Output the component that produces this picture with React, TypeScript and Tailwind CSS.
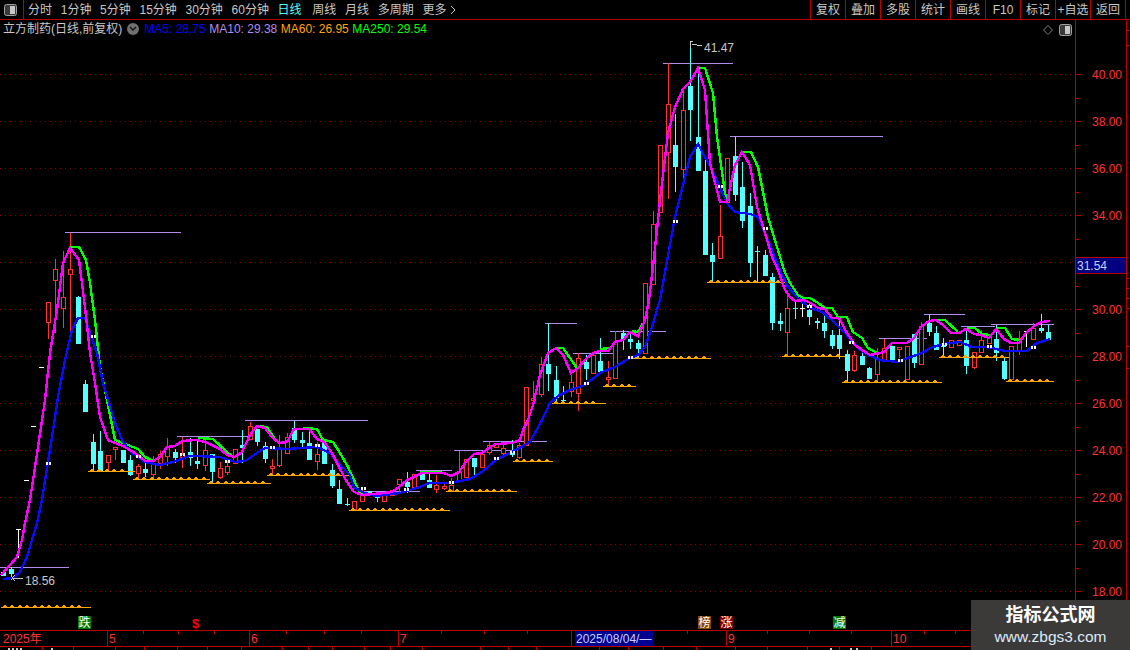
import React from "react";

type Candle = [number, number, number, number, number, "r" | "c" | "w"];
type Pt = [number, number];

// x, body top, body bottom, wick high, wick low, colour (all in page pixels)
const candles: Candle[] = [
  [3, 572, 576, 572, 576, "c"], [11, 569, 574, 567, 580, "c"], [18, 529, 530, 529, 558, "w"],
  [26, 480, 481, 480, 481, "w"], [33, 426, 427, 426, 427, "w"], [41, 367, 368, 367, 368, "w"],
  [48, 302, 322, 302, 339, "r"], [55, 269, 280, 259, 333, "r"], [63, 297, 308, 251, 328, "r"],
  [70, 269, 274, 233, 336, "r"], [78, 297, 344, 296, 344, "c"], [85, 384, 412, 380, 412, "c"],
  [93, 442, 464, 434, 471, "c"], [100, 451, 471, 431, 471, "c"], [108, 455, 462, 455, 471, "r"],
  [115, 447, 449, 447, 460, "r"], [123, 450, 463, 450, 463, "c"], [130, 460, 475, 455, 476, "c"],
  [138, 466, 473, 464, 478, "r"], [145, 469, 473, 463, 477, "c"], [153, 464, 474, 456, 478, "r"],
  [160, 454, 463, 451, 469, "r"], [167, 447, 456, 438, 466, "r"], [175, 452, 458, 449, 463, "c"],
  [182, 454, 457, 437, 468, "r"], [190, 452, 458, 438, 466, "c"], [197, 461, 464, 441, 469, "c"],
  [205, 450, 465, 438, 471, "r"], [212, 454, 472, 454, 483, "c"], [220, 468, 477, 462, 479, "r"],
  [227, 466, 472, 460, 475, "r"], [235, 449, 463, 449, 463, "r"], [242, 445, 448, 430, 463, "c"],
  [250, 426, 439, 422, 439, "r"], [257, 429, 442, 429, 446, "c"], [265, 446, 459, 442, 463, "c"],
  [272, 466, 468, 459, 475, "r"], [279, 449, 465, 435, 467, "r"], [287, 437, 453, 433, 453, "r"],
  [294, 428, 440, 421, 443, "c"], [302, 440, 443, 432, 449, "c"], [309, 443, 460, 432, 460, "c"],
  [317, 454, 461, 442, 470, "r"], [324, 443, 464, 442, 464, "c"], [332, 470, 486, 464, 488, "c"],
  [339, 489, 504, 480, 504, "c"], [347, 504, 505, 498, 506, "c"], [354, 501, 509, 501, 509, "r"],
  [362, 495, 501, 488, 501, "r"], [369, 491, 496, 491, 496, "c"], [377, 493, 498, 493, 502, "c"],
  [384, 494, 501, 494, 501, "r"], [392, 490, 495, 490, 495, "r"], [399, 479, 484, 479, 492, "r"],
  [407, 482, 487, 472, 493, "c"], [414, 474, 487, 474, 487, "r"], [422, 474, 480, 471, 480, "c"],
  [429, 480, 488, 472, 488, "c"], [436, 485, 489, 475, 493, "r"], [444, 486, 488, 484, 490, "r"],
  [451, 485, 490, 478, 490, "r"], [459, 472, 480, 451, 480, "r"], [466, 459, 477, 459, 477, "r"],
  [474, 458, 467, 458, 475, "c"], [482, 454, 467, 451, 467, "r"], [489, 445, 452, 442, 455, "r"],
  [496, 443, 447, 443, 447, "r"], [503, 448, 453, 445, 457, "r"], [512, 452, 455, 440, 457, "c"],
  [519, 445, 457, 443, 459, "r"], [526, 387, 445, 387, 445, "r"], [533, 398, 400, 381, 407, "r"],
  [541, 364, 394, 357, 397, "r"], [548, 364, 374, 323, 391, "c"], [556, 380, 398, 366, 403, "c"],
  [563, 400, 401, 386, 403, "c"], [571, 382, 391, 375, 397, "r"], [578, 358, 393, 353, 411, "r"],
  [586, 362, 369, 355, 380, "c"], [593, 355, 373, 352, 374, "r"], [600, 361, 372, 338, 374, "c"],
  [608, 377, 379, 361, 386, "r"], [615, 342, 378, 331, 378, "r"], [623, 333, 339, 330, 350, "c"],
  [630, 339, 342, 331, 349, "c"], [638, 343, 349, 340, 358, "c"], [645, 283, 353, 283, 353, "r"],
  [653, 224, 284, 211, 284, "r"], [660, 145, 212, 145, 212, "r"], [668, 104, 152, 63, 199, "r"],
  [675, 145, 167, 114, 192, "c"], [683, 110, 169, 90, 180, "r"], [690, 86, 110, 43, 141, "c"],
  [698, 137, 171, 73, 171, "c"], [705, 171, 255, 158, 255, "c"], [712, 255, 262, 243, 282, "c"],
  [720, 236, 258, 205, 258, "r"], [727, 158, 202, 158, 202, "r"], [735, 156, 195, 137, 201, "c"],
  [742, 187, 221, 162, 228, "c"], [750, 206, 263, 193, 277, "c"], [757, 251, 252, 246, 283, "c"],
  [765, 255, 276, 250, 276, "c"], [772, 277, 323, 273, 330, "c"], [780, 321, 324, 313, 331, "c"],
  [787, 308, 332, 295, 356, "r"], [795, 308, 309, 302, 319, "c"], [802, 308, 309, 302, 317, "w"],
  [809, 310, 317, 303, 325, "c"], [817, 321, 323, 318, 329, "c"], [824, 323, 331, 313, 338, "c"],
  [832, 335, 346, 330, 349, "c"], [839, 335, 349, 319, 359, "c"], [847, 354, 371, 350, 382, "c"],
  [854, 355, 370, 351, 372, "r"], [862, 356, 365, 353, 365, "c"], [869, 368, 379, 367, 379, "c"],
  [877, 358, 374, 348, 382, "r"], [884, 348, 359, 339, 359, "r"], [892, 346, 360, 346, 360, "c"],
  [899, 347, 349, 347, 358, "r"], [907, 346, 379, 346, 379, "r"], [914, 334, 363, 334, 368, "c"],
  [921, 326, 364, 322, 364, "r"], [929, 323, 332, 315, 336, "c"], [936, 333, 350, 326, 350, "c"],
  [943, 345, 347, 338, 356, "c"], [951, 340, 347, 340, 347, "r"], [959, 340, 345, 340, 345, "r"],
  [966, 340, 366, 330, 374, "c"], [974, 352, 367, 352, 369, "r"], [981, 340, 352, 330, 352, "r"],
  [989, 337, 343, 337, 343, "r"], [996, 339, 353, 325, 361, "c"], [1004, 361, 379, 357, 380, "c"],
  [1011, 346, 379, 346, 379, "r"], [1019, 338, 350, 331, 355, "r"], [1026, 331, 332, 331, 347, "w"],
  [1033, 328, 339, 323, 339, "r"], [1041, 328, 331, 314, 333, "c"], [1048, 332, 340, 325, 340, "c"],
];

const magenta: Pt[] = [
  [1, 575], [10, 565], [17, 557], [22, 540], [25, 523], [30, 500], [32, 487], [38, 447], [45, 400], [50, 353],
  [57, 310], [63, 263], [70, 248], [79, 260], [85, 307], [90, 353], [95, 383], [100, 417], [108, 440], [115, 443],
  [123, 446], [130, 450], [138, 455], [145, 461], [153, 461], [160, 457], [167, 447], [175, 446], [182, 441],
  [197, 440], [205, 442], [212, 445], [220, 449], [227, 455], [235, 457], [242, 452], [250, 435], [257, 426],
  [265, 428], [272, 437], [279, 443], [287, 442], [294, 429], [309, 429], [317, 439], [324, 442], [332, 453],
  [339, 467], [347, 482], [354, 492], [362, 495], [384, 493], [392, 492], [399, 487], [407, 480], [414, 477],
  [422, 473], [444, 473], [451, 476], [459, 472], [466, 462], [474, 454], [482, 453], [489, 448], [496, 444],
  [512, 443], [520, 440], [523, 430], [528, 420], [533, 405], [540, 375], [548, 353], [556, 348], [563, 355],
  [571, 373], [578, 368], [586, 359], [593, 353], [600, 351], [608, 351], [615, 342], [623, 340], [630, 332],
  [638, 336], [645, 320], [649, 300], [653, 267], [658, 220], [660, 200], [668, 133], [675, 107], [683, 89],
  [690, 82], [698, 68], [705, 90], [710, 163], [720, 202], [727, 202], [735, 165], [742, 152], [750, 165],
  [757, 207], [765, 233], [772, 257], [778, 270], [785, 290], [790, 297], [795, 301], [803, 300], [809, 302],
  [818, 308], [825, 309], [832, 318], [839, 318], [847, 333], [855, 345], [862, 350], [870, 355], [880, 353],
  [884, 352], [892, 343], [907, 343], [914, 338], [921, 327], [929, 321], [936, 320], [943, 325], [951, 333],
  [959, 333], [966, 329], [974, 334], [981, 335], [989, 338], [996, 329], [1004, 339], [1011, 343], [1019, 343],
  [1026, 333], [1033, 327], [1041, 322], [1050, 321],
];

const blue: Pt[] = [
  [3, 579], [13, 578], [20, 572], [27, 557], [32, 540], [37, 523], [42, 500], [44, 487], [52, 437], [58, 397],
  [65, 360], [72, 330], [78, 318], [85, 318], [90, 333], [97, 353], [103, 383], [115, 423], [123, 442], [132, 453],
  [145, 462], [160, 465], [173, 462], [190, 456], [197, 456], [220, 457], [235, 462], [245, 461], [257, 453],
  [265, 448], [287, 449], [302, 448], [317, 447], [330, 453], [340, 465], [350, 475], [354, 487], [362, 492],
  [375, 496], [400, 493], [420, 487], [429, 483], [450, 483], [470, 479], [482, 472], [496, 460], [512, 452],
  [530, 442], [542, 420], [550, 403], [558, 396], [570, 390], [585, 385], [600, 373], [615, 367], [630, 358],
  [638, 355], [645, 347], [652, 327], [657, 310], [660, 300], [675, 217], [690, 157], [698, 144], [712, 170],
  [727, 203], [735, 212], [750, 214], [758, 217], [772, 250], [780, 270], [788, 287], [795, 295], [808, 307],
  [822, 312], [832, 320], [845, 333], [858, 348], [868, 355], [880, 360], [897, 362], [905, 359], [922, 353],
  [930, 348], [943, 344], [960, 342], [972, 347], [987, 347], [1005, 351], [1027, 351], [1037, 343], [1050, 339],
];

// green only shows where it rises out of the magenta line
const green: Pt[][] = [
  [[70, 247], [79, 247], [86, 260], [90, 283], [95, 320], [100, 367], [107, 400], [115, 440], [123, 443], [138, 449], [145, 457], [153, 461]],
  [[198, 438], [213, 439], [227, 452], [233, 457]],
  [[257, 426], [267, 427], [277, 442]],
  [[303, 428], [317, 429], [323, 440], [333, 442], [340, 453], [348, 467], [360, 493], [365, 493]],
  [[420, 472], [440, 472], [452, 476]],
  [[557, 348], [563, 348], [577, 368]],
  [[600, 349], [610, 348]],
  [[632, 331], [638, 332], [643, 323]],
  [[698, 68], [705, 68], [713, 93], [717, 137], [725, 193], [727, 203]],
  [[742, 152], [751, 152], [758, 167], [768, 217], [777, 247], [784, 270], [790, 283], [798, 295], [803, 298], [810, 298], [818, 303], [825, 308], [832, 308], [838, 317], [847, 317], [853, 332], [862, 338], [868, 348], [877, 353]],
  [[900, 343], [907, 343]],
  [[937, 320], [945, 320], [958, 332]],
  [[967, 328], [975, 328], [982, 334], [990, 335]],
  [[997, 328], [1005, 328], [1012, 339], [1020, 340]],
];

const purple: [number, number, number][] = [
  [0, 69, 567], [65, 181, 232], [177, 248, 436], [245, 368, 420], [363, 420, 491], [416, 452, 470],
  [454, 512, 450], [483, 547, 441], [545, 577, 323], [573, 613, 353], [610, 666, 331], [663, 733, 63],
  [730, 883, 136], [879, 927, 338], [924, 965, 314], [961, 995, 326], [991, 1054, 324],
];

const orange: [number, number, number][] = [
  [1, 91, 607], [88, 135, 471], [133, 210, 479], [207, 271, 483], [267, 350, 475], [349, 450, 510],
  [446, 517, 491], [513, 553, 461], [552, 606, 403], [603, 636, 386], [633, 711, 358], [707, 785, 282],
  [782, 845, 356], [842, 942, 382], [939, 1009, 357], [1006, 1054, 381],
];

const marks: Pt[] = [
  [48, 464], [93, 337], [138, 457], [182, 455], [227, 462], [272, 448], [317, 446], [363, 489], [406, 490],
  [451, 483], [496, 459], [512, 453], [586, 384], [630, 358], [675, 222], [720, 187], [765, 229], [809, 307],
  [851, 343], [900, 361], [944, 345], [989, 347], [1033, 348],
];

// 32.00 sits under the last-price box
const prices = ["40.00", "38.00", "36.00", "34.00", "", "30.00", "28.00", "26.00", "24.00", "22.00", "20.00", "18.00"];
const leftTabs = ["分时", "1分钟", "5分钟", "15分钟", "30分钟", "60分钟", "日线", "周线", "月线", "多周期", "更多"];
const rightTabs = ["复权", "叠加", "多股", "统计", "画线", "F10", "标记", "+自选", "返回"];
const months: [string, string][] = [
  ["2025年", "w-[107px]"], ["5", "w-[142px]"], ["6", "w-[149px]"], ["7", "w-[328px]"], ["9", "w-[165px]"], ["10", "flex-1"],
];
const dateTicks = [143, 178, 214, 286, 324, 361, 441, 484, 527, 687, 767, 809, 851, 924, 955];
const footerTicks = [42, 73, 115, 144, 177, 207, 241, 282, 308, 332, 364, 390, 422, 480, 508, 536, 599, 628, 663, 696, 735, 767, 807, 839, 871];

const toPoints = (pts: Pt[]) => pts.map((p) => p.join(",")).join(" ");
const range = (n: number) => Array.from({ length: n }, (_, i) => i);

const PanelIcon = () => (
  <svg width="13" height="12" viewBox="0 0 13 12">
    <rect x="0.5" y="0.5" width="12" height="11" rx="2" fill="#3a3a3a" stroke="#a0a0a0" />
    <rect x="6" y="2" width="5" height="8" fill="#c8c8c8" />
  </svg>
);

const Chart = () => (
  <svg className="absolute inset-0" width="1075" height="610" viewBox="0 20 1075 610" shapeRendering="crispEdges">
    {/* dotted price grid */}
    {range(12).map((i) => (
      <line key={i} x1="0" x2="1075" y1={74.5 + i * 47} y2={74.5 + i * 47} stroke="#8c0000" strokeDasharray="1 4" />
    ))}
    {purple.map(([a, b, y], i) => (
      <line key={i} x1={a} x2={b} y1={y + 0.5} y2={y + 0.5} stroke="#b08cf0" />
    ))}
    {candles.map(([x, top, bot, hi, lo, c], i) => {
      const color = c === "r" ? "#ff3232" : c === "c" ? "#54ffff" : "#ffffff";
      return (
        <g key={i}>
          <line x1={x + 0.5} x2={x + 0.5} y1={hi} y2={lo} stroke={color} />
          {c === "r" ? (
            <rect x={x - 1.5} y={top + 0.5} width="4" height={bot - top} fill="#000000" stroke={color} />
          ) : (
            <rect x={x - 2} y={top} width="5" height={Math.max(bot - top, 1)} fill={color} />
          )}
        </g>
      );
    })}
    {orange.map(([a, b, y], i) => (
      <g key={i}>
        <rect x={a} y={y} width={b - a} height="1" fill="#ffa500" />
        {range(Math.floor((b - a - 3) / 7.4)).map((k) => (
          <rect key={k} x={Math.round(a + 2 + k * 7.4)} y={y - 1} width="4" height="1" fill="#ffa500" />
        ))}
        {range(Math.floor((b - a - 3) / 7.4)).map((k) => (
          <rect key={k} x={Math.round(a + 3 + k * 7.4)} y={y - 2} width="2" height="1" fill="#ffa500" />
        ))}
      </g>
    ))}
    <g fill="none" strokeWidth="2.4" strokeLinejoin="miter">
      {green.map((seg, i) => (
        <polyline key={i} points={toPoints(seg)} stroke="#00ff00" />
      ))}
      <polyline points={toPoints(blue)} stroke="#0a0aff" />
      <polyline points={toPoints(magenta)} stroke="#ff00ff" />
    </g>
    {marks.map(([x, y], i) => (
      <g key={i}>
        <rect x={x - 2} y={y - 2} width="2" height="3" fill="#ffffff" />
        <rect x={x + 1} y={y - 2} width="2" height="3" fill="#ffffff" />
      </g>
    ))}
    {/* high and low callouts */}
    <polyline points="690,48 690,41 693,41" fill="none" stroke="#c8c8c8" />
    <line x1="692" x2="702" y1="44" y2="46" stroke="#c8c8c8" />
    <line x1="690.5" x2="690.5" y1="48" y2="63" stroke="#54ffff" />
    <line x1="12" x2="23" y1="578.5" y2="578.5" stroke="#c8c8c8" />
    <polyline points="15,575 12,578 15,581" fill="none" stroke="#c8c8c8" />
  </svg>
);

const Badge = ({ text, left, bg }: { text: string; left: string; bg: string }) => (
  <div className={`absolute top-[596px] h-[13px] w-[13px] flex items-center justify-center text-[12px] leading-none text-white ${left} ${bg}`}>
    {text}
  </div>
);

export default function App() {
  return (
    <div
      className="relative flex h-[650px] w-[1130px] flex-col overflow-hidden bg-black text-[12px] text-[#c8c8c8]"
      style={{ fontFamily: '"Liberation Sans", "Noto Sans CJK SC", sans-serif' }}
    >
      {/* top toolbar */}
      <div className="flex h-[20px] border-b border-[#b80000]">
        <div className="flex w-[24px] items-center justify-center border-r border-[#b80000] pr-[2px]">
          <PanelIcon />
        </div>
        <div className="ml-[4px] flex flex-1 items-center gap-[8.7px]">
          {leftTabs.map((t) => (
            <span key={t} className={t === "日线" ? "mr-[2px] text-[#54ffff]" : ""}>
              {t}
            </span>
          ))}
          <svg className="-ml-[5px]" width="7" height="10" viewBox="0 0 7 10" fill="none" stroke="#c8c8c8">
            <path d="M1 1l4 4-4 4" />
          </svg>
        </div>
        <div className="mr-[4px] flex">
          {rightTabs.map((t) => (
            <div key={t} className="flex w-[35px] items-center justify-center border-l border-[#b80000] whitespace-nowrap last:w-[36px]">
              {t}
            </div>
          ))}
          <div className="w-0 border-l border-[#b80000]" />
        </div>
      </div>

      <div className="flex h-[610px]">
        {/* price panel */}
        <div className="relative w-[1075px]">
          <Chart />
          <div className="relative flex h-[17px] items-center pl-[3px]">
            <span>立方制药(日线,前复权)</span>
            <span className="mx-[5px] flex h-[12px] w-[12px] items-center justify-center rounded-full bg-[#707070]">
              <svg width="8" height="6" viewBox="0 0 8 6" fill="none" stroke="#111111" strokeWidth="1.4">
                <path d="M1 1l3 3 3-3" />
              </svg>
            </span>
            <span className="text-[#0000ff]">MA5: 28.75</span>
            <span className="ml-[3.5px] text-[#b08cf0]">MA10: 29.38</span>
            <span className="ml-[3.5px] text-[#ffa500]">MA60: 26.95</span>
            <span className="ml-[3.5px] text-[#00ff00]">MA250: 29.54</span>
          </div>
          <div className="absolute right-[3px] top-[4px] flex items-center gap-[6px]">
            <svg width="10" height="10" viewBox="0 0 10 10" fill="none" stroke="#808080">
              <path d="M5 0.5L9.5 5 5 9.5 0.5 5z" />
            </svg>
            <PanelIcon />
          </div>
          <div className="absolute left-[704px] top-[19px] text-[#c8c8c8]">41.47</div>
          <div className="absolute left-[25px] top-[552px] text-[#c8c8c8]">18.56</div>
          <Badge text="跌" left="left-[78px]" bg="bg-[#007a00]" />
          <div className="absolute left-[192px] top-[597px] text-[13px] font-bold leading-none text-[#ff0000]">$</div>
          <Badge text="榜" left="left-[698px]" bg="bg-[#8a4500]" />
          <Badge text="涨" left="left-[720px]" bg="bg-[#7a0000]" />
          <Badge text="减" left="left-[833px]" bg="bg-[#007a00]" />
        </div>

        {/* price axis */}
        <div className="relative w-[52px] border-x border-[#b80000] pt-[31.5px] text-[#ff3232]">
          <svg className="absolute left-0 top-0" width="10" height="610" shapeRendering="crispEdges">
            {range(24).map((i) => (
              <line key={i} x1="0" x2={i % 2 ? 3 : 5} y1={54.5 + i * 23.5} y2={54.5 + i * 23.5} stroke="#b80000" />
            ))}
          </svg>
          {prices.map((p, i) => (
            <div key={i} className="flex h-[47px] items-center justify-end pr-[4px]">
              {p}
            </div>
          ))}
          <div className="absolute left-0 right-0 top-[237px] flex h-[17px] items-center border-y border-[#b80000] bg-[#000080] pl-[1px] text-[#c8d0ff]">
            31.54
          </div>
        </div>
        <svg width="3" height="610" shapeRendering="crispEdges">
          {[10, 25, 258, 268, 278, 288, 326, 348].map((y) => (
            <line key={y} x1="0" x2="3" y1={y + 0.5} y2={y + 0.5} stroke="#b80000" />
          ))}
        </svg>
      </div>

      {/* date axis */}
      <div className="relative flex h-[17px] border-y border-[#b80000] text-[#ff3232]">
        {months.map(([label, width]) => (
          <div key={label} className={`flex items-center border-l border-[#b80000] pl-[1px] first:border-l-0 first:pl-[3px] ${width}`}>
            {label}
          </div>
        ))}
        <svg className="absolute left-0 top-0" width="1130" height="4" shapeRendering="crispEdges">
          {dateTicks.map((x) => (
            <line key={x} x1={x + 0.5} x2={x + 0.5} y1="0" y2="3" stroke="#b80000" />
          ))}
        </svg>
        <div className="absolute left-[575px] top-0 flex h-[15px] w-[78px] items-center whitespace-nowrap bg-[#000090] pl-[1px] text-[#c8d0ff]">
          2025/08/04/—
        </div>
        <div className="absolute left-[571px] top-0 h-[15px] border-l border-[#b80000]" />
      </div>

      {/* clipped row under the date axis */}
      <svg width="1130" height="3" shapeRendering="crispEdges">
        {footerTicks.map((x) => (
          <line key={x} x1={x + 0.5} x2={x + 0.5} y1="0" y2="3" stroke="#b80000" />
        ))}
        {[8, 12, 16, 20, 51, 830, 850, 856].map((x) => (
          <rect key={x} x={x} y="1" width="2" height="2" fill="#c8c8c8" />
        ))}
      </svg>

      {/* site watermark */}
      <div className="absolute bottom-0 right-0 flex h-[50px] w-[159px] flex-col items-center justify-center bg-[#3c3939]">
        <div className="text-[18px] font-bold leading-[24px] text-white">指标公式网</div>
        <div className="text-[15.5px] leading-[20px] text-[#dcecfa]">www.zbgs3.com</div>
      </div>
    </div>
  );
}
